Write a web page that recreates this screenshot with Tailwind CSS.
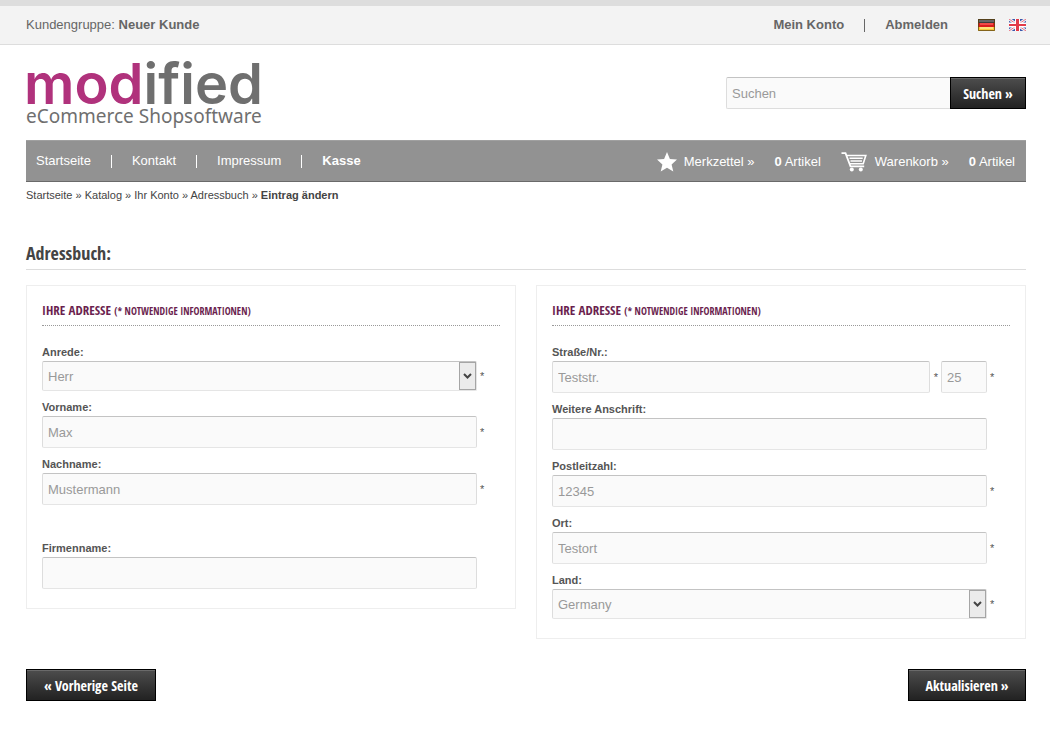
<!DOCTYPE html>
<html lang="de">
<head>
<meta charset="utf-8">
<meta name="viewport" content="width=device-width, initial-scale=1">
<title>Adressbuch</title>
<script src="https://cdn.jsdelivr.net/npm/@tailwindcss/browser@4"></script>
</head>
<body class="bg-white font-['Liberation_Sans',sans-serif] text-[13px] text-[#666]">
<div class="flex h-[45px] items-center justify-between border-t-[6px] border-b border-t-[#ddd] border-b-[#ddd] bg-[#f3f3f3] pr-6 pl-[26px]">
  <p>Kundengruppe: <strong>Neuer Kunde</strong></p>
  <div class="flex items-center font-bold">
    <a href="#konto">Mein Konto</a>
    <span class="mx-5 h-[13px] w-px bg-[#666]"></span>
    <a href="#abmelden">Abmelden</a>
    <a href="#de" aria-label="Deutsch" class="mb-px ml-[30px]">
      <svg class="block h-3 w-[17px]" viewBox="0 0 17 12"><path fill="#3c3c3c" d="M0 0h17v4H0z"/><path fill="#666" d="M1 1h15v2H1z"/><path fill="#d81e1e" d="M0 4h17v4H0z"/><path fill="#f04a48" d="M2 4h13v2H2z"/><path fill="#f6c83c" d="M0 8h17v4H0z"/><path fill="#ffe27a" d="M2 8h13v2H2z"/><path d="M.5.5h16v11H.5z" fill="none" stroke="#5e4310" stroke-opacity=".75"/></svg>
    </a>
    <a href="#en" aria-label="English" class="mb-px ml-[14px]">
      <svg class="block h-3 w-[17px]" viewBox="0 0 17 12"><path fill="#3a58ab" d="M0 0h17v12H0z"/><path d="M0 0l17 12M17 0L0 12" stroke="#f2f2fa" stroke-width="3"/><path d="M0 0l17 12M17 0L0 12" stroke="#e8707c" stroke-width="1"/><path d="M8.500 0v12M0 6h17" stroke="#fff" stroke-width="5"/><path d="M8.500 0v12" stroke="#e23a4a" stroke-width="3"/><path d="M0 6h17" stroke="#e23a4a" stroke-width="2"/></svg>
    </a>
  </div>
</div>

<div class="pr-6 pl-[26px]">
  <header class="flex h-[95px] items-start justify-between">
    <a href="#start" aria-label="modified eCommerce Shopsoftware" class="block pt-[14px] text-[#6f6f6f]">
      <span class="-ml-[2px] block font-['Inter',sans-serif] text-[56px] leading-[50px] font-semibold"><span class="text-[#b0327c]">mod</span>ified</span>
      <span class="block font-['Noto_Sans',sans-serif] text-[19px] leading-[14px]">eCommerce Shopsoftware</span>
    </a>
    <form class="mt-8 flex">
      <input type="text" aria-label="Suchen" placeholder="Suchen" class="h-8 w-56 rounded-l-xs border border-r-0 border-[#ddd] border-t-[#c3c3c3] bg-[#fafafa] px-[5px] text-[13px] placeholder:text-[#999]">
      <button type="button" class="flex h-8 w-[76px] items-center justify-center gap-[3px] border border-black bg-linear-to-b from-[#4d4d4d] to-[#222] font-['Open_Sans_Condensed','Open_Sans',sans-serif] text-[14px] font-bold text-white inset-shadow-[0_1px_0_#6a6a6a]"><span>Suchen</span><span>»</span></button>
    </form>
  </header>

  <nav class="flex h-[42px] items-center justify-between border-t border-b border-t-[#a0a0a0] border-b-[#6a6a6a] bg-[#929292] pr-[11px] pl-[10px] text-white">
    <div class="flex items-center">
      <a href="#start">Startseite</a><span class="mx-5 h-[13px] w-px bg-white"></span>
      <a href="#kontakt">Kontakt</a><span class="mx-5 h-[13px] w-px bg-white"></span>
      <a href="#impressum">Impressum</a><span class="mx-5 h-[13px] w-px bg-white"></span>
      <a href="#kasse" class="font-bold">Kasse</a>
    </div>
    <div class="flex items-center pt-[2px]">
      <svg class="mr-[7px] h-5 w-5" viewBox="0 0 20 20" fill="#fff"><path d="M10 0l2.900 6.900 7.100.6-5.400 4.900 1.700 7.100L10 15.700l-6.300 3.800 1.700-7.100L0 7.500l7.100-.6z"/></svg>
      <a href="#merkzettel">Merkzettel »</a>
      <span class="mr-5 ml-5"><strong>0</strong> Artikel</span>
      <svg class="mr-2 h-5 w-[26px]" viewBox="0 0 26 20" fill="none" stroke="#fff"><path d="M.5 1.200h4l5 13.200h13.700" stroke-width="1.800"/><path d="M5.500 3.500h19.300l-2.600 8.200H8.700" stroke-width="1.600"/><path d="M8.500 6.300h13.200M9.500 9h11.500" stroke-width="1.500"/><circle cx="10.800" cy="17.500" r="2" fill="#fff" stroke="none"/><circle cx="19.800" cy="17.500" r="2" fill="#fff" stroke="none"/></svg>
      <a href="#warenkorb">Warenkorb »</a>
      <span class="ml-5"><strong>0</strong> Artikel</span>
    </div>
  </nav>

  <p class="pt-[5px] text-[11px] leading-4 text-[#444]"><a href="#start">Startseite</a> » <a href="#katalog">Katalog</a> » <a href="#ihr-konto">Ihr Konto</a> » <a href="#adressbuch">Adressbuch</a> » <strong>Eintrag ändern</strong></p>

  <h1 class="mt-[37px] border-b border-[#ddd] pb-[2px] font-['Open_Sans_Condensed','Open_Sans',sans-serif] text-[18px] leading-[27px] font-bold text-[#444]">Adressbuch:</h1>

  <form>
    <div class="mt-[15px] grid grid-cols-2 items-start gap-5 text-[11px] text-[#555]">
      <section class="border border-[#eee] px-[15px] pb-[19px]">
        <h2 class="mb-[17px] border-b border-dotted border-[#999] pt-[14px] pb-[3px] font-['Open_Sans_Condensed','Open_Sans',sans-serif] text-[13px] leading-[21px] font-bold text-[#6b1f4f]">IHRE ADRESSE <span class="text-[10px]">(* NOTWENDIGE INFORMATIONEN)</span></h2>
        <label for="anrede" class="block leading-[18px] font-bold">Anrede:</label>
        <div class="mb-[7px] flex items-center">
          <div class="relative w-[95%]">
            <select id="anrede" class="block h-[30px] w-full appearance-none rounded-xs border border-[#e5e5e5] border-t-[#c3c3c3] border-l-[#ddd] bg-[#fafafa] px-[5px] pt-px text-[13px] text-[#999]"><option>Herr</option></select>
            <svg class="pointer-events-none absolute top-px right-px h-7 w-[17px] border border-[#a5a5a5] bg-[#ebebeb]" viewBox="0 0 15 26"><path d="M4 11l3.500 3.500L11 11" fill="none" stroke="#444" stroke-width="2"/></svg>
          </div><span class="ml-[3px]">*</span>
        </div>
        <label for="vorname" class="block leading-[18px] font-bold">Vorname:</label>
        <div class="mb-[7px] flex items-center"><input id="vorname" type="text" value="Max" class="h-8 w-[95%] rounded-xs border border-[#ddd] border-t-[#c3c3c3] border-b-[#e5e5e5] bg-[#fafafa] px-[5px] text-[13px] text-[#999]"><span class="ml-[3px]">*</span></div>
        <label for="nachname" class="block leading-[18px] font-bold">Nachname:</label>
        <div class="mb-[34px] flex items-center"><input id="nachname" type="text" value="Mustermann" class="h-8 w-[95%] rounded-xs border border-[#ddd] border-t-[#c3c3c3] border-b-[#e5e5e5] bg-[#fafafa] px-[5px] text-[13px] text-[#999]"><span class="ml-[3px]">*</span></div>
        <label for="firma" class="block leading-[18px] font-bold">Firmenname:</label>
        <div class="flex items-center"><input id="firma" type="text" class="h-8 w-[95%] rounded-xs border border-[#ddd] border-t-[#c3c3c3] border-b-[#e5e5e5] bg-[#fafafa] px-[5px] text-[13px] text-[#999]"></div>
      </section>

      <section class="border border-[#eee] px-[15px] pb-[19px]">
        <h2 class="mb-[17px] border-b border-dotted border-[#999] pt-[14px] pb-[3px] font-['Open_Sans_Condensed','Open_Sans',sans-serif] text-[13px] leading-[21px] font-bold text-[#6b1f4f]">IHRE ADRESSE <span class="text-[10px]">(* NOTWENDIGE INFORMATIONEN)</span></h2>
        <label for="strasse" class="block leading-[18px] font-bold">Straße/Nr.:</label>
        <div class="mb-[7px] flex items-center">
          <div class="flex w-[95%] items-center">
            <input id="strasse" type="text" value="Teststr." class="h-8 min-w-0 flex-1 rounded-xs border border-[#ddd] border-t-[#c3c3c3] border-b-[#e5e5e5] bg-[#fafafa] px-[5px] text-[13px] text-[#999]"><span class="mr-[3px] ml-1">*</span>
            <input type="text" aria-label="Hausnummer" value="25" class="h-8 w-[46px] rounded-xs border border-[#ddd] border-t-[#c3c3c3] border-b-[#e5e5e5] bg-[#fafafa] px-[5px] text-[13px] text-[#999]">
          </div><span class="ml-[3px]">*</span>
        </div>
        <label for="weitere" class="block leading-[18px] font-bold">Weitere Anschrift:</label>
        <div class="mb-[7px] flex items-center"><input id="weitere" type="text" class="h-8 w-[95%] rounded-xs border border-[#ddd] border-t-[#c3c3c3] border-b-[#e5e5e5] bg-[#fafafa] px-[5px] text-[13px] text-[#999]"></div>
        <label for="plz" class="block leading-[18px] font-bold">Postleitzahl:</label>
        <div class="mb-[7px] flex items-center"><input id="plz" type="text" value="12345" class="h-8 w-[95%] rounded-xs border border-[#ddd] border-t-[#c3c3c3] border-b-[#e5e5e5] bg-[#fafafa] px-[5px] text-[13px] text-[#999]"><span class="ml-[3px]">*</span></div>
        <label for="ort" class="block leading-[18px] font-bold">Ort:</label>
        <div class="mb-[7px] flex items-center"><input id="ort" type="text" value="Testort" class="h-8 w-[95%] rounded-xs border border-[#ddd] border-t-[#c3c3c3] border-b-[#e5e5e5] bg-[#fafafa] px-[5px] text-[13px] text-[#999]"><span class="ml-[3px]">*</span></div>
        <label for="land" class="block leading-[18px] font-bold">Land:</label>
        <div class="flex items-center">
          <div class="relative w-[95%]">
            <select id="land" class="block h-[30px] w-full appearance-none rounded-xs border border-[#e5e5e5] border-t-[#c3c3c3] border-l-[#ddd] bg-[#fafafa] px-[5px] pt-px text-[13px] text-[#999]"><option>Germany</option></select>
            <svg class="pointer-events-none absolute top-px right-px h-7 w-[17px] border border-[#a5a5a5] bg-[#ebebeb]" viewBox="0 0 15 26"><path d="M4 11l3.500 3.500L11 11" fill="none" stroke="#444" stroke-width="2"/></svg>
          </div><span class="ml-[3px]">*</span>
        </div>
      </section>
    </div>
    <div class="mt-[30px] mb-7 flex justify-between">
      <button type="button" class="flex h-8 w-[130px] items-center justify-center gap-[3px] border border-black bg-linear-to-b from-[#4d4d4d] to-[#222] font-['Open_Sans_Condensed','Open_Sans',sans-serif] text-[14px] font-bold text-white inset-shadow-[0_1px_0_#6a6a6a]"><span>«</span><span>Vorherige Seite</span></button>
      <button type="button" class="flex h-8 w-[118px] items-center justify-center gap-[3px] border border-black bg-linear-to-b from-[#4d4d4d] to-[#222] font-['Open_Sans_Condensed','Open_Sans',sans-serif] text-[14px] font-bold text-white inset-shadow-[0_1px_0_#6a6a6a]"><span>Aktualisieren</span><span>»</span></button>
    </div>
  </form>
</div>
</body>
</html>
